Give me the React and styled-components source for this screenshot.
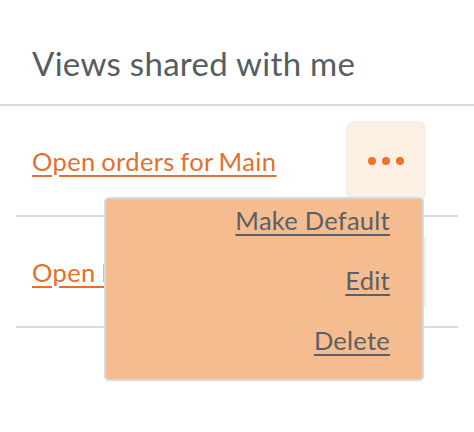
import React from "react";
import styled, { createGlobalStyle } from "styled-components";

const GlobalStyle = createGlobalStyle`
  body {
    margin: 0;
    background: #ffffff;
    font-family: Lato, "Open Sans", sans-serif;
  }
`;

const views = [
  { id: 1, name: "Open orders for Main", open: true },
  { id: 2, name: "Open Invoices", open: false },
];

const menuItems = ["Make Default", "Edit", "Delete"];

function App() {
  return (
    <React.Fragment>
      <GlobalStyle />
      <Page>
        <Header>Views shared with me</Header>
        <List>
          {views.map((view) => (
            <Row key={view.id}>
              <ViewLink href="#">{view.name}</ViewLink>
              <Actions>
                <KebabButton aria-label="More actions">
                  <Dot />
                  <Dot />
                  <Dot />
                </KebabButton>
                {view.open && (
                  <Menu>
                    {menuItems.map((item) => (
                      <MenuItem key={item} href="#">
                        {item}
                      </MenuItem>
                    ))}
                  </Menu>
                )}
              </Actions>
            </Row>
          ))}
        </List>
      </Page>
    </React.Fragment>
  );
}

export default App;

const Page = styled.div`
  width: 474px;
  height: 432px;
  padding-top: 33px;
  box-sizing: border-box;
`;

const Header = styled.h2`
  margin: 0;
  padding: 0 32px 11px;
  font-size: 33px;
  font-weight: 400;
  line-height: 60px;
  letter-spacing: 0.3px;
  color: #555d63;
  border-bottom: 2px solid #d7dbde;
`;

const List = styled.div`
  margin: 0 16px;
`;

const Row = styled.div`
  display: flex;
  align-items: center;
  justify-content: space-between;
  height: 109px;
  padding: 0 34px 0 16px;
  border-bottom: 2px solid #d7dbde;
`;

const ViewLink = styled.a`
  font-size: 25.5px;
  letter-spacing: 0.4px;
  word-spacing: -1.5px;
  color: #e2702f;
  text-decoration: underline;
  text-underline-offset: 4px;
  text-decoration-thickness: 2px;
`;

const Actions = styled.div`
  position: relative;
`;

const KebabButton = styled.button`
  display: flex;
  align-items: center;
  justify-content: center;
  gap: 6px;
  width: 76px;
  height: 76px;
  border: none;
  border-radius: 5px;
  background: #fdf0e3;
  box-shadow: 0 0 3px rgba(180, 140, 100, 0.5);
  cursor: pointer;
`;

const Dot = styled.span`
  width: 8px;
  height: 8px;
  border-radius: 50%;
  background: #f07128;
`;

const Menu = styled.div`
  position: absolute;
  top: 74px;
  right: 0;
  z-index: 2;
  display: flex;
  flex-direction: column;
  align-items: flex-end;
  gap: 30px;
  width: 320px;
  box-sizing: border-box;
  height: 184px;
  padding: 6px 32px 0;
  background: #f5bd8f;
  border: 2px solid #d6dadd;
  border-radius: 5px;
`;

const MenuItem = styled.a`
  font-size: 25.5px;
  line-height: 30px;
  letter-spacing: 0.25px;
  color: #5a6066;
  text-decoration: underline;
  text-underline-offset: 4px;
  text-decoration-thickness: 2px;
`;
